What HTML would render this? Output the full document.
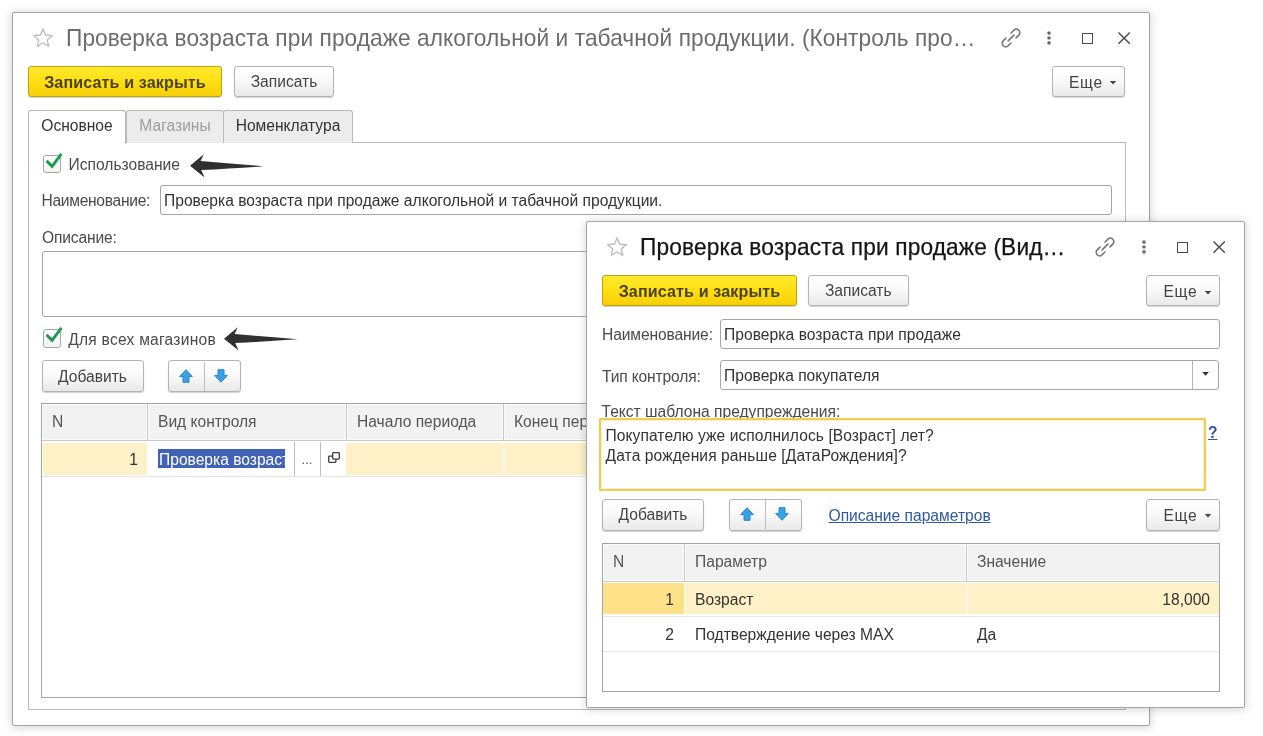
<!DOCTYPE html>
<html lang="ru">
<head>
<meta charset="utf-8">
<title>Проверка возраста при продаже</title>
<style>
*{box-sizing:border-box;margin:0;padding:0}
html,body{width:1263px;height:736px;overflow:hidden;background:#fff}
body{position:relative;filter:blur(.45px);font-family:"Liberation Sans",sans-serif;font-size:15.6px;color:#4a4a4a;}
.abs,.win,.t,.btn,.inp,.cb,.tab,.panel,.tbl,.hc,.cell,.ico{position:absolute}
.win{background:#fff;border:1.5px solid #a4a4a4;border-radius:2px;box-shadow:0 1px 9px 1px rgba(0,0,0,.16)}
.t{white-space:nowrap;height:20px;line-height:20px}
.title{font-size:23.2px;height:30px;line-height:30px;transform:scaleX(.9785);transform-origin:0 50%}
.btn{height:31px;line-height:30px;border:1px solid #b3b3b3;border-radius:3px;text-align:center;white-space:nowrap;
 background:linear-gradient(#ffffff 0%,#fafafa 45%,#e9e9e9 100%);box-shadow:0 1px 1px rgba(0,0,0,.18);color:#444}
.btn.y{font-size:16.1px;letter-spacing:.12px;line-height:30.8px;background:linear-gradient(#ffe92e 0%,#ffe015 45%,#f8cf06 100%);border-color:#c2a20c;font-weight:bold;color:#4a4218}
.inp{height:29.6px;line-height:29px;border:1px solid #a6a6a6;border-radius:3px;background:#fff;padding-left:3px;white-space:nowrap;overflow:hidden;color:#333}
.cb{width:18.5px;height:17.5px;border:1px solid #a6a6a6;border-radius:3px;background:linear-gradient(#fff,#f4f4f4)}
.tab{height:33px;line-height:30px;top:110px;border:1px solid #b9b9b9;border-bottom:none;border-radius:3px 3px 0 0;text-align:center;background:#ececec;color:#333}
.tab.on{background:#fff;height:34px;z-index:3;color:#333}
.tab.dis{color:#9d9d9d}
.panel{border:1px solid #b9b9b9}
.tbl{border:1px solid #a3a3a3;background:#fff;overflow:hidden}
.hc{top:0;background:#f2f2f2;border-right:1px solid #c6c6c6;border-bottom:1px solid #c9c9c9;box-shadow:inset 1px 1px 0 #fcfcfc,inset -1px -1px 0 #fcfcfc;padding-left:10px;color:#555;white-space:nowrap;overflow:hidden}
.cell{white-space:nowrap;overflow:hidden}
a.lnk{color:#2c58a4;text-decoration:underline}
svg{position:absolute;overflow:visible}
</style>
</head>
<body>

<!-- ================= WINDOW 1 ================= -->
<div class="win" id="w1" style="left:12px;top:12px;width:1138px;height:714px"></div>

<svg style="left:32.5px;top:28px" width="20" height="19" viewBox="0 0 21 20"><polygon points="10.5,1.2 13.3,7.4 20,8.1 15,12.6 16.4,19.2 10.5,15.8 4.6,19.2 6,12.6 1,8.1 7.7,7.4" fill="none" stroke="#bcbcbc" stroke-width="1.4" stroke-linejoin="miter"/></svg>
<div class="t title" style="left:66px;top:23px;color:#6c6c6c;letter-spacing:.07px">Проверка возраста при продаже алкогольной и табачной продукции. (Контроль про…</div>

<svg style="left:999.7px;top:26.5px" width="22" height="22" viewBox="-11 -11 22 22" fill="none" stroke="#777" stroke-width="1.65" stroke-linecap="round"><g transform="rotate(-45)"><path d="M-3.6 -3.5 H-7.5 a3.5 3.5 0 0 0 0 7 H-3.6"/><path d="M3.6 -3.5 H7.5 a3.5 3.5 0 0 1 0 7 H3.6"/><path d="M-4 0 H4"/></g></svg>
<svg style="left:1046.3px;top:31.2px" width="6" height="14" viewBox="-3 -7 6 14" fill="#666"><rect x="-1.6" y="-6.5" width="3.2" height="3.2" rx="1.1"/><rect x="-1.6" y="-1.6" width="3.2" height="3.2" rx="1.1"/><rect x="-1.6" y="3.3" width="3.2" height="3.2" rx="1.1"/></svg>
<div class="abs" style="left:1081.5px;top:32.6px;width:11.2px;height:11px;border:1.6px solid #4a4a4a"></div>
<svg style="left:1118.3px;top:31.7px" width="12.3" height="12.3" viewBox="0 0 13 13" stroke="#4a4a4a" stroke-width="1.5" fill="none"><path d="M.5 .5 L12.5 12.5 M12.5 .5 L.5 12.5"/></svg>

<div class="btn y" style="left:28px;top:66px;width:194px">Записать и закрыть</div>
<div class="btn" style="left:234px;top:66px;width:100px">Записать</div>
<div class="btn" style="left:1052px;top:66px;width:73px;padding-right:5px;letter-spacing:.8px;line-height:31px">Еще</div>
<svg style="left:1109px;top:81.2px" width="8" height="4" viewBox="0 0 8 5"><path d="M0 0 H8 L4 4.5 Z" fill="#444"/></svg>

<div class="panel" style="left:28px;top:142px;width:1098px;height:568px"></div>
<div class="tab on" style="left:28px;width:98px">Основное</div>
<div class="tab dis" style="left:126px;width:98px">Магазины</div>
<div class="tab" style="left:223px;width:130px">Номенклатура</div>

<div class="cb" style="left:42.7px;top:155.2px"></div>
<svg style="left:45px;top:152px" width="18" height="18" viewBox="0 0 18 18"><path d="M1.6 8.9 L7.1 14.4 L16.4 1.9" fill="none" stroke="#1a9a4c" stroke-width="2.9" stroke-linejoin="miter"/></svg>
<div class="t" style="left:68.5px;top:154.5px">Использование</div>
<svg style="left:190px;top:153px" width="75" height="25" viewBox="0 0 75 25"><path d="M0 12.7 L13.8 1.3 L10.6 8 Q40 10.5 73.6 13.3 Q40 15.5 11.2 17.1 L14.6 24.6 Z" fill="#303030"/></svg>

<div class="t" style="left:41.5px;top:190.8px;letter-spacing:-.3px">Наименование:</div>
<div class="inp" style="left:160px;top:185.2px;width:952px">Проверка возраста при продаже алкогольной и табачной продукции.</div>

<div class="t" style="left:42px;top:227.5px;letter-spacing:-.15px">Описание:</div>
<div class="inp" style="left:41.5px;top:250.7px;width:1070.5px;height:66.8px"></div>

<div class="cb" style="left:42.7px;top:329px;height:18.6px"></div>
<svg style="left:45px;top:326.2px" width="18" height="18" viewBox="0 0 18 18"><path d="M1.6 8.9 L7.1 14.4 L16.4 1.9" fill="none" stroke="#1a9a4c" stroke-width="2.9" stroke-linejoin="miter"/></svg>
<div class="t" style="left:68.2px;top:329.7px;letter-spacing:.24px">Для всех магазинов</div>
<svg style="left:224px;top:326.2px" width="75" height="25" viewBox="0 0 75 25"><path d="M0 12.7 L13.8 1.3 L10.6 8 Q40 10.5 73.6 13.3 Q40 15.5 11.2 17.1 L14.6 24.6 Z" fill="#303030"/></svg>

<div class="btn" style="left:41.5px;top:360.2px;width:102px;height:31.5px;line-height:31px">Добавить</div>
<div class="btn" style="left:168px;top:360.2px;width:73px;height:31.5px"></div>
<div class="abs" style="left:204px;top:362px;width:1px;height:29px;background:#bdbdbd"></div>
<svg style="left:179.0px;top:369.4px" width="14" height="14" viewBox="-7 -7 14 14"><path d="M0 -6.3 L6.3 0.6 H3 V6.3 H-3 V0.6 H-6.3 Z" fill="#3aa2e3" stroke="#2785c9" stroke-width="1" stroke-linejoin="round"/></svg>
<svg style="left:214.3px;top:369.4px" width="14" height="14" viewBox="-7 -7 14 14"><path d="M0 6.3 L6.3 -0.6 H3 V-6.3 H-3 V-0.6 H-6.3 Z" fill="#3aa2e3" stroke="#2785c9" stroke-width="1" stroke-linejoin="round"/></svg>

<div class="tbl" id="t1" style="left:41px;top:403px;width:1071px;height:295px">
  <div class="hc" style="left:0;width:106px;height:37px;line-height:36px">N</div>
  <div class="hc" style="left:106px;width:199px;height:37px;line-height:36px">Вид контроля</div>
  <div class="hc" style="left:305px;width:157px;height:37px;line-height:36px">Начало периода</div>
  <div class="hc" style="left:462px;width:300px;height:37px;line-height:36px">Конец периода</div>
  <div class="abs" style="left:1px;top:38.6px;width:1068px;height:32.6px;background:#fef1c7"></div>
  <div class="abs" style="left:105px;top:38px;width:2px;height:34px;background:#fff"></div>
  
  <div class="abs" style="left:461px;top:38px;width:1.5px;height:34px;background:#fffaea"></div>
  <div class="abs" style="left:0;top:72px;width:1069px;height:1px;background:#e3e3e3"></div>
  <div class="cell" style="left:0;top:38px;width:96px;height:34px;line-height:35px;text-align:right;color:#333">1</div>
  <div class="abs" style="left:106px;top:38px;width:197.6px;height:34px;background:#fff"></div>
  <div class="abs" style="left:116px;top:45.2px;width:126.6px;height:18.6px;background:#4262b5"></div>
  <div class="cell" style="left:117px;top:38px;width:126px;height:34px;line-height:35px;color:#fff">Проверка возраста</div>
  <div class="abs" style="left:252px;top:38px;width:1px;height:34px;background:#bdbdbd"></div>
  <div class="abs" style="left:278px;top:38px;width:1px;height:34px;background:#bdbdbd"></div>
  <div class="cell" style="left:252.5px;top:41px;width:25px;height:30px;line-height:30px;text-align:center;font-size:13px;color:#555">...</div>
  <svg style="left:286.1px;top:48.3px" width="12" height="11" viewBox="0 0 12 11" fill="none" stroke="#3c3c3c" stroke-width="1.3"><rect x="4.7" y=".7" width="6.6" height="6.4" rx=".8"/><path d="M4.7 4.1 H1.5 a.8 .8 0 0 0 -.8 .8 V9.5 a.8 .8 0 0 0 .8 .8 H7.1 a.8 .8 0 0 0 .8 -.8 V7.1"/></svg>
</div>

<!-- ================= WINDOW 2 ================= -->
<div class="win" id="w2" style="left:586px;top:221.2px;width:659px;height:487.3px"></div>

<svg style="left:606.5px;top:237px" width="20" height="19" viewBox="0 0 21 20"><polygon points="10.5,1.2 13.3,7.4 20,8.1 15,12.6 16.4,19.2 10.5,15.8 4.6,19.2 6,12.6 1,8.1 7.7,7.4" fill="none" stroke="#bcbcbc" stroke-width="1.4" stroke-linejoin="miter"/></svg>
<div class="t title" style="left:640px;top:232px;color:#141414;letter-spacing:.15px;-webkit-text-stroke:.25px #141414">Проверка возраста при продаже (Вид…</div>

<svg style="left:1094.2px;top:235.5px" width="22" height="22" viewBox="-11 -11 22 22" fill="none" stroke="#777" stroke-width="1.65" stroke-linecap="round"><g transform="rotate(-45)"><path d="M-3.6 -3.5 H-7.5 a3.5 3.5 0 0 0 0 7 H-3.6"/><path d="M3.6 -3.5 H7.5 a3.5 3.5 0 0 1 0 7 H3.6"/><path d="M-4 0 H4"/></g></svg>
<svg style="left:1141.3px;top:240.2px" width="6" height="14" viewBox="-3 -7 6 14" fill="#666"><rect x="-1.6" y="-6.5" width="3.2" height="3.2" rx="1.1"/><rect x="-1.6" y="-1.6" width="3.2" height="3.2" rx="1.1"/><rect x="-1.6" y="3.3" width="3.2" height="3.2" rx="1.1"/></svg>
<div class="abs" style="left:1176.5px;top:241.6px;width:11.2px;height:11px;border:1.6px solid #4a4a4a"></div>
<svg style="left:1213.3px;top:240.7px" width="12.3" height="12.3" viewBox="0 0 13 13" stroke="#4a4a4a" stroke-width="1.5" fill="none"><path d="M.5 .5 L12.5 12.5 M12.5 .5 L.5 12.5"/></svg>

<div class="btn y" style="left:602px;top:275px;width:195px">Записать и закрыть</div>
<div class="btn" style="left:808px;top:275px;width:100.5px">Записать</div>
<div class="btn" style="left:1146px;top:275px;width:74px;padding-right:5px;letter-spacing:.8px;line-height:31px">Еще</div>
<svg style="left:1204px;top:291.2px" width="8" height="4" viewBox="0 0 8 5"><path d="M0 0 H8 L4 4.5 Z" fill="#444"/></svg>

<div class="t" style="left:602px;top:324.8px;letter-spacing:-.12px">Наименование:</div>
<div class="inp" style="left:720px;top:319px;width:500px;letter-spacing:.05px">Проверка возраста при продаже</div>

<div class="t" style="left:602px;top:366.8px;letter-spacing:-.15px">Тип контроля:</div>
<div class="inp" style="left:720px;top:360.2px;width:499px">Проверка покупателя</div>
<div class="abs" style="left:1192px;top:361px;width:1px;height:28px;background:#b5b5b5"></div>
<svg style="left:1202px;top:372.4px" width="7" height="3.8" viewBox="0 0 7 4"><path d="M0 0 H7 L3.5 4 Z" fill="#333"/></svg>

<div class="t" style="left:601.5px;top:402.3px;letter-spacing:0px">Текст шаблона предупреждения:</div>
<div class="abs" style="left:599px;top:418px;width:607px;height:73px;border:2px solid #f2cc4f;background:#fff;border-radius:1px;box-shadow:inset 0 0 0 1px rgba(250,225,140,.45)"></div>
<div class="t" style="left:605.5px;top:426px;color:#333;letter-spacing:.07px">Покупателю уже исполнилось [Возраст] лет?</div>
<div class="t" style="left:605.5px;top:446px;color:#333;letter-spacing:.09px">Дата рождения раньше [ДатаРождения]?</div>
<div class="t" style="left:1208px;top:423px;font-weight:bold"><a class="lnk">?</a></div>

<div class="btn" style="left:602px;top:499.4px;width:102px;height:31.4px;line-height:30.6px">Добавить</div>
<div class="btn" style="left:729px;top:499.4px;width:73px;height:31.4px"></div>
<div class="abs" style="left:765px;top:500px;width:1px;height:29px;background:#bdbdbd"></div>
<svg style="left:740.0px;top:507.4px" width="14" height="14" viewBox="-7 -7 14 14"><path d="M0 -6.3 L6.3 0.6 H3 V6.3 H-3 V0.6 H-6.3 Z" fill="#3aa2e3" stroke="#2785c9" stroke-width="1" stroke-linejoin="round"/></svg>
<svg style="left:775.3px;top:507.4px" width="14" height="14" viewBox="-7 -7 14 14"><path d="M0 6.3 L6.3 -0.6 H3 V-6.3 H-3 V-0.6 H-6.3 Z" fill="#3aa2e3" stroke="#2785c9" stroke-width="1" stroke-linejoin="round"/></svg>
<div class="t" style="left:828.5px;top:505.8px"><a class="lnk">Описание параметров</a></div>
<div class="btn" style="left:1146px;top:499.4px;height:31.4px;width:74px;padding-right:5px;letter-spacing:.8px;line-height:31px">Еще</div>
<svg style="left:1204px;top:514.2px" width="8" height="4" viewBox="0 0 8 5"><path d="M0 0 H8 L4 4.5 Z" fill="#444"/></svg>

<div class="tbl" id="t2" style="left:602px;top:543px;width:618px;height:149px">
  <div class="hc" style="left:0;width:82px;height:38px;line-height:36px">N</div>
  <div class="hc" style="left:82px;width:282px;height:38px;line-height:36px">Параметр</div>
  <div class="hc" style="left:364px;width:254px;height:38px;line-height:36px;border-right:none">Значение</div>
  <div class="abs" style="left:0;top:38.7px;width:616px;height:31.8px;background:#fef1c7"></div>
  <div class="abs" style="left:0;top:38.7px;width:81px;height:31.8px;background:#fce189"></div>
  <div class="abs" style="left:81px;top:39px;width:2px;height:32px;background:#fff8e0"></div>
  <div class="abs" style="left:363px;top:39px;width:2px;height:32px;background:#fff8e0"></div>
  <div class="abs" style="left:0;top:72px;width:616px;height:1px;background:#e6e6e6"></div>
  <div class="abs" style="left:0;top:107px;width:616px;height:1px;background:#e6e6e6"></div>
  <div class="cell" style="left:0;top:39px;width:71px;height:32px;line-height:33px;text-align:right;color:#333">1</div>
  <div class="cell" style="left:92px;top:39px;width:260px;height:32px;line-height:33px;color:#333">Возраст</div>
  <div class="cell" style="left:364px;top:39px;width:243px;height:32px;line-height:33px;text-align:right;color:#333">18,000</div>
  <div class="cell" style="left:0;top:74px;width:71px;height:33px;line-height:33px;text-align:right;color:#333">2</div>
  <div class="cell" style="left:92px;top:74px;width:260px;height:33px;line-height:33px;color:#333">Подтверждение через МАХ</div>
  <div class="cell" style="left:374px;top:74px;width:200px;height:33px;line-height:33px;color:#333">Да</div>
</div>

</body>
</html>
